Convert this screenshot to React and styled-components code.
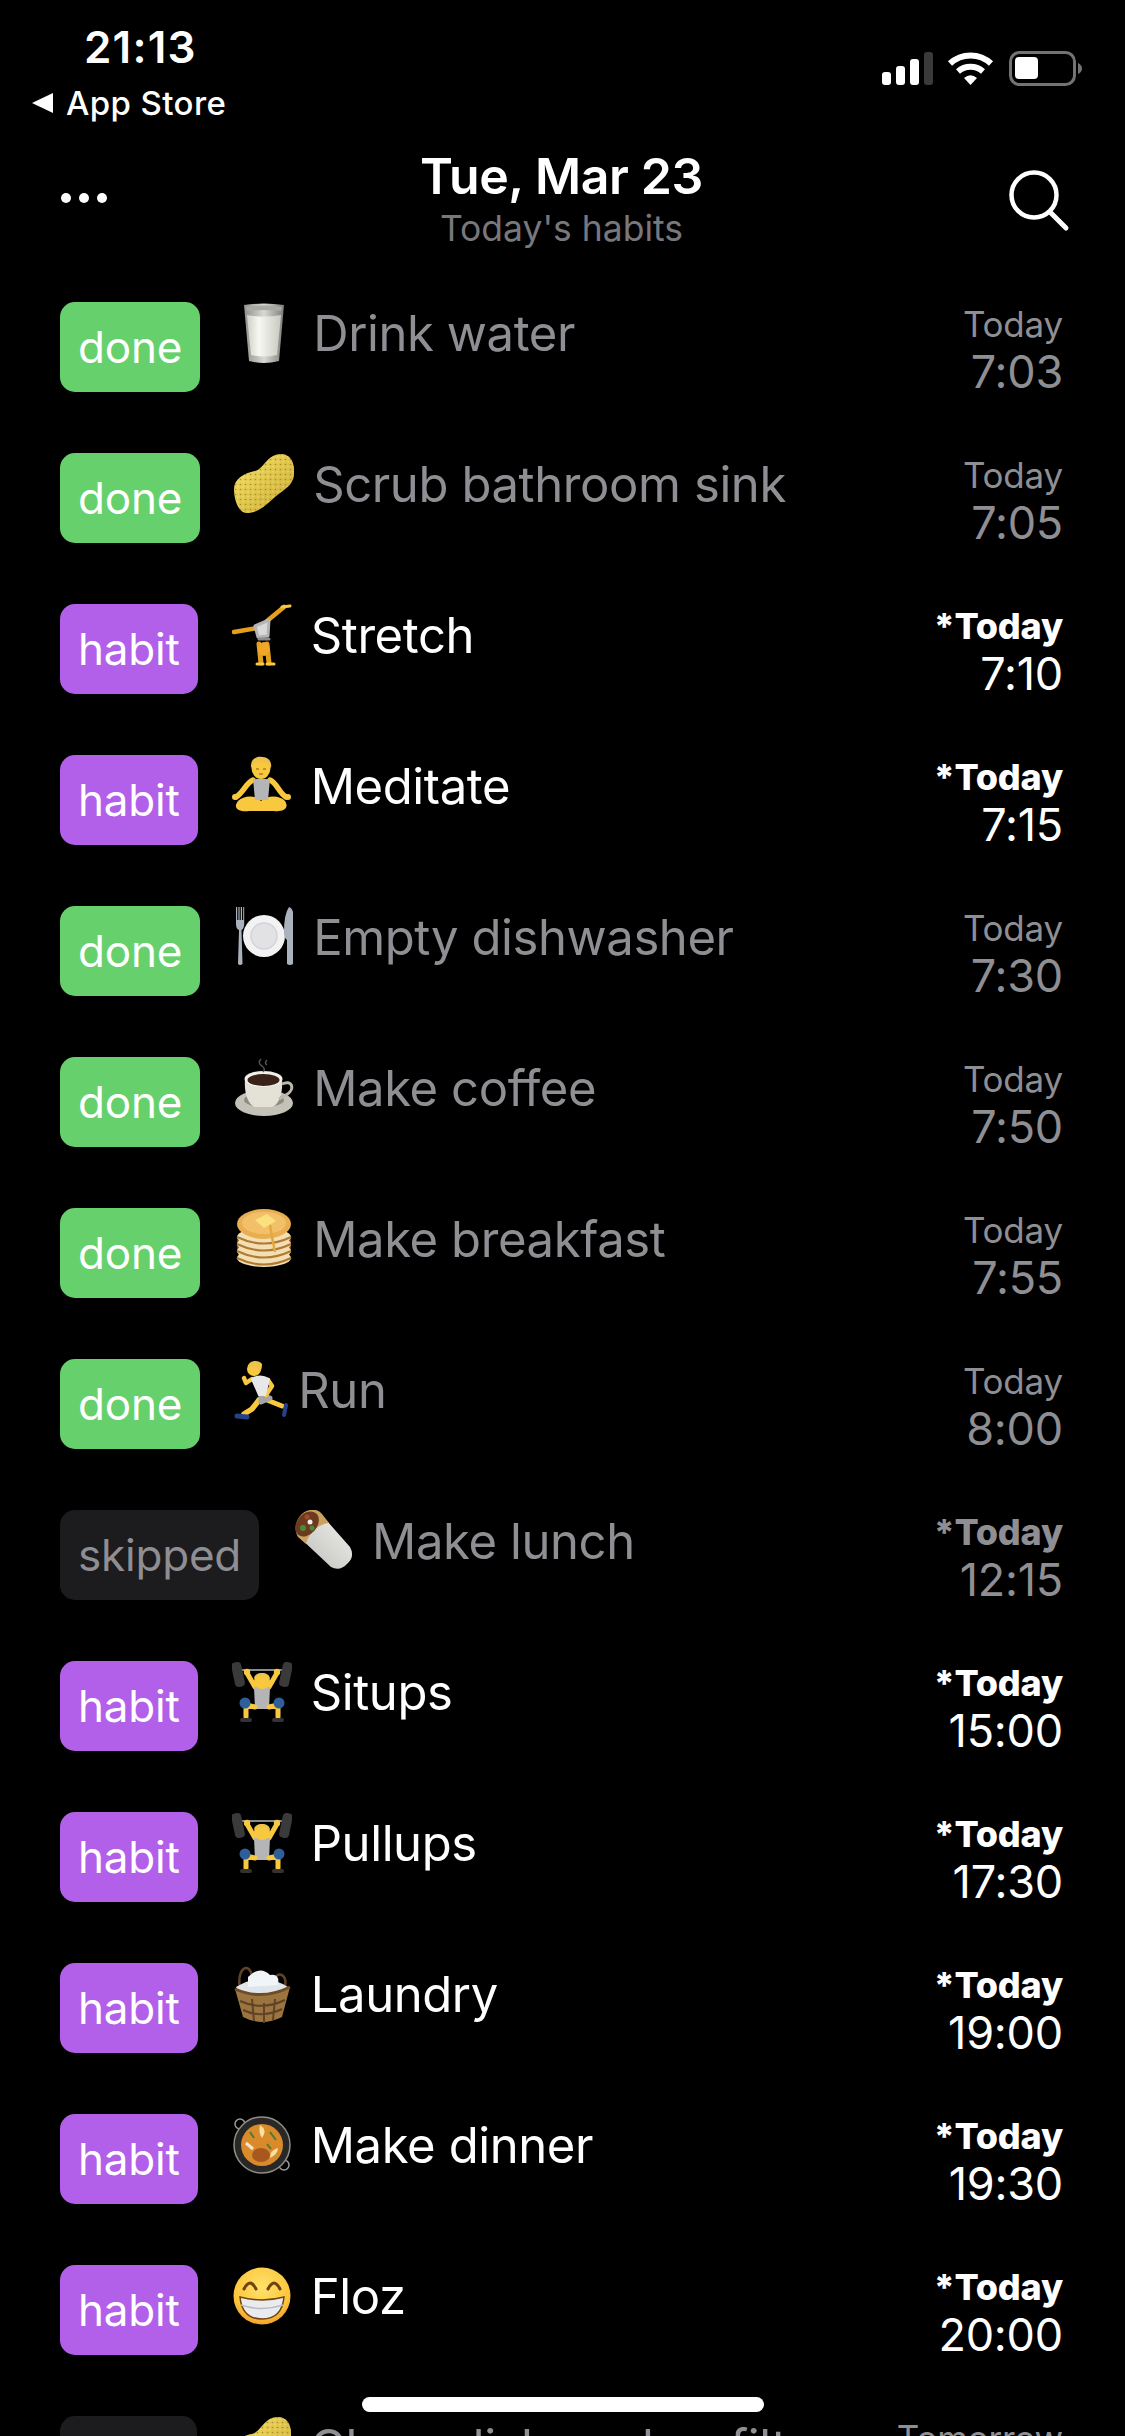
import React from 'react'
import styled, { createGlobalStyle } from 'styled-components'

const FONT = `Inter, 'Noto Sans', 'Liberation Sans', sans-serif`
const GRAY = '#8e8e93'

const GlobalStyle = createGlobalStyle`
  html, body {
    margin: 0;
    padding: 0;
    background: #000;
  }
  body {
    font-family: ${FONT};
    -webkit-font-smoothing: antialiased;
  }
`

const Screen = styled.div`
  position: relative;
  width: 1125px;
  height: 2436px;
  background: #000;
  color: #fff;
  overflow: hidden;
`

const StatusBar = styled.div`
  display: flex;
  justify-content: space-between;
  align-items: flex-start;
  height: 122px;
  padding: 0 43px 0 32px;
`

const StatusLeft = styled.div`
  display: flex;
  flex-direction: column;
  padding-top: 22px;
`

const Clock = styled.div`
  margin-left: 52px;
  font-size: 44px;
  line-height: 50px;
  font-weight: 600;
  letter-spacing: 1.2px;
`

const BackLink = styled.div`
  display: flex;
  align-items: center;
  gap: 13px;
  margin-top: 11px;
  font-size: 33px;
  line-height: 40px;
  font-weight: 500;
  letter-spacing: 0.4px;
`

const BackArrow = styled.span`
  width: 0;
  height: 0;
  border-style: solid;
  border-width: 10px 21px 10px 0;
  border-color: transparent #fff transparent transparent;
`

const StatusIcons = styled.div`
  padding-top: 51px;
`

const NavBar = styled.div`
  display: flex;
  justify-content: space-between;
  align-items: center;
  height: 122px;
  margin-top: 12px;
  padding: 0 55px 0 61px;
`

const Dots = styled.div`
  display: flex;
  gap: 8px;
  width: 100px;
  padding-top: 6px;
  span {
    width: 10px;
    height: 10px;
    border-radius: 50%;
    background: #fff;
  }
`

const NavTitle = styled.div`
  display: flex;
  flex-direction: column;
  align-items: center;
  margin: 8px 8px 0 0;
`

const DateText = styled.div`
  font-size: 50px;
  line-height: 54px;
  font-weight: 600;
  letter-spacing: -0.4px;
`

const SubText = styled.div`
  margin-top: 6px;
  font-size: 35.5px;
  line-height: 40px;
  color: #77777c;
`

const SearchBox = styled.div`
  display: flex;
  justify-content: flex-end;
  width: 100px;
  padding-top: 12px;
`

const List = styled.div`
  margin-top: 46px;
`

const Row = styled.div`
  display: flex;
  align-items: flex-start;
  height: 151px;
  padding: 0 62px 0 60px;
`

const BADGE_BG = { done: '#66d16c', habit: '#b25fe9', skipped: '#1c1c1e', later: '#1c1c1e' }

const Badge = styled.div`
  flex: none;
  box-sizing: border-box;
  min-width: 137px;
  height: 90px;
  padding: 0 18px;
  margin-right: 34px;
  border-radius: 15px;
  background: ${(p) => BADGE_BG[p.$kind]};
  color: ${(p) => (p.$kind === 'skipped' ? GRAY : '#fff')};
  font-size: 44px;
  line-height: 90px;
  letter-spacing: -0.2px;
  text-align: center;
`

const Title = styled.div`
  flex: 1;
  display: flex;
  align-items: flex-start;
  gap: ${(p) => (p.$tight ? '4px' : '19px')};
  min-width: 0;
  white-space: nowrap;
`

const EmojiBox = styled.svg`
  flex: none;
  width: 60px;
  height: 62px;
`

const Name = styled.div`
  margin-top: 3px;
  font-size: 49px;
  line-height: 58px;
  letter-spacing: -0.4px;
  color: ${(p) => (p.$dim ? GRAY : '#fff')};
`

const When = styled.div`
  flex: none;
  display: flex;
  flex-direction: column;
  align-items: flex-end;
  color: ${(p) => (p.$dim ? GRAY : '#fff')};
`

const Day = styled.div`
  font-size: ${(p) => (p.$bold ? '36px' : '35px')};
  line-height: 44px;
  font-weight: ${(p) => (p.$bold ? 800 : 400)};
  letter-spacing: -0.2px;
`

const Time = styled.div`
  font-size: 45px;
  line-height: 52px;
  letter-spacing: -0.2px;
`

const HomeBar = styled.div`
  position: absolute;
  left: 362px;
  bottom: 24px;
  width: 402px;
  height: 15px;
  border-radius: 8px;
  background: #fff;
`

function StatusGlyphs() {
  return (
    <svg width="200" height="36" viewBox="0 0 200 36">
      <g fill="#fff">
        <rect x="0" y="21" width="9" height="13" rx="3" />
        <rect x="14" y="15" width="9" height="19" rx="3" />
        <rect x="28" y="8" width="9" height="26" rx="3" />
      </g>
      <rect x="42" y="1" width="9" height="33" rx="3" fill="#3a3a3c" />
      <g fill="none" stroke="#fff" strokeWidth="6">
        <path d="M68 12.5 A 30 30 0 0 1 109 12.5" />
        <path d="M76 20.5 A 19 19 0 0 1 101 20.5" />
      </g>
      <path d="M82 27 Q 88.5 21.5 95 27 L 88.5 34 Z" fill="#fff" />
      <rect x="128.5" y="1.5" width="64" height="32" rx="9" fill="none" stroke="#737376" strokeWidth="3" />
      <rect x="133" y="6" width="23" height="22" rx="4" fill="#fff" />
      <path d="M196 12 Q 200 14 200 17.5 Q 200 21 196 23 Z" fill="#737376" />
    </svg>
  )
}

function SearchIcon() {
  return (
    <svg width="62" height="64" viewBox="0 0 62 64" fill="none" stroke="#fff" strokeLinecap="round">
      <circle cx="26" cy="26" r="22.5" strokeWidth="4.5" />
      <path d="M42 43 L58 59" strokeWidth="5" />
    </svg>
  )
}

const Skin = '#f8c93e'
const SkinDark = '#e49f1e'
const Shirt = '#b5b5b8'

function Milk() {
  return (
    <>
      <defs>
        <linearGradient id="glass" x1="0" x2="1">
          <stop offset="0" stopColor="#8f8f8c" />
          <stop offset="0.5" stopColor="#d8d8d4" />
          <stop offset="1" stopColor="#7c7c7a" />
        </linearGradient>
        <linearGradient id="milk" x1="0" x2="1">
          <stop offset="0" stopColor="#cfcfc8" />
          <stop offset="0.35" stopColor="#f8f8f2" />
          <stop offset="1" stopColor="#c9c9c2" />
        </linearGradient>
      </defs>
      <path d="M10 3 Q30 0 50 3 L45 59 Q30 63 15 59 Z" fill="url(#glass)" />
      <path d="M13 13 Q30 16 47 13 L43 53 Q30 56 17 53 Z" fill="url(#milk)" />
      <path d="M12 5 Q30 2 48 5 L47 9 Q30 7 13 9 Z" fill="#a9a9a6" />
    </>
  )
}

const SPONGE_PATH =
  'M0 36 C0 26 10 20 21 18 C30 16 33 1 47 1 C58 1 61 12 60 22 C59 33 49 37 41 44 C32 52 24 60 13 60 C4 60 0 46 0 36 Z'

function Sponge() {
  return (
    <>
      <defs>
        <linearGradient id="sponge" x1="0" y1="0" x2="1" y2="1">
          <stop offset="0" stopColor="#f6e268" />
          <stop offset="1" stopColor="#c8a830" />
        </linearGradient>
        <pattern id="pores" width="5" height="5" patternUnits="userSpaceOnUse">
          <circle cx="1.5" cy="1.5" r="0.8" fill="#a98c25" />
          <circle cx="4" cy="3.8" r="0.5" fill="#fff2a0" />
        </pattern>
      </defs>
      <path d={SPONGE_PATH} fill="url(#sponge)" />
      <path d={SPONGE_PATH} fill="url(#pores)" />
    </>
  )
}

function Cartwheel() {
  return (
    <g fill="none" strokeLinecap="round" strokeLinejoin="round">
      <path d="M35 17 L52 3" stroke={SkinDark} strokeWidth="4.5" />
      <path d="M58 2 L50 3" stroke={Skin} strokeWidth="3" />
      <path d="M25 24 L2 28" stroke={SkinDark} strokeWidth="4.5" />
      <path d="M27 40 L29 59 M35 40 L37 59" stroke={SkinDark} strokeWidth="5" />
      <path d="M25 60 H31 M35 60 H42" stroke={Skin} strokeWidth="3" />
      <path d="M23 22 L37 16 L36 32 L26 33 Z" fill="#d9d9da" stroke="#b5b5b8" strokeWidth="3" />
      <ellipse cx="32" cy="45" rx="5.5" ry="7" fill="#eea726" stroke="none" />
      <path d="M27 35 L37 35" stroke="#8b8b8b" strokeWidth="3" />
    </g>
  )
}

function Meditate() {
  return (
    <g>
      <path d="M6 46 C12 40 24 40 29 46 C35 40 48 40 53 46 C58 54 50 57 42 56 C34 56 25 56 17 56 C8 57 0 54 6 46 Z" fill={Skin} />
      <path d="M21 25 C14 28 11 38 4 42 M38 25 C45 28 47 38 54 42" stroke={Skin} strokeWidth="5.5" fill="none" strokeLinecap="round" />
      <path d="M21 24 H38 L36 45 H23 Z" fill={Shirt} />
      <circle cx="3" cy="42" r="3" fill={Skin} />
      <circle cx="56" cy="42" r="3" fill={Skin} />
      <ellipse cx="29" cy="13" rx="9.5" ry="11" fill={Skin} />
      <path d="M19 13 C18 3 26 1 30 2 C37 2 40 7 39 13 C36 9 32 6 26 8 C23 8 21 10 19 13 Z" fill="#efc24a" />
      <path d="M24 14 H27 M31 14 H34 M27 19 H31" stroke="#8a5a10" strokeWidth="1.2" />
    </g>
  )
}

function Plate() {
  return (
    <>
      <circle cx="30" cy="30" r="21" fill="#f2f2f2" />
      <circle cx="30" cy="30" r="13" fill="#e2e2e4" stroke="#cfd4dc" strokeWidth="1.5" />
      <g fill="#aab2bd">
        <path d="M2 1 H3.2 V14 H4.4 V1 H5.6 V14 H6.8 V1 H8 V14 H9.2 V1 H10.2 V18 Q10 23 7.5 24 L8.5 58 Q6 60 4 58 L5 24 Q2 23 2 18 Z" />
        <path d="M55 1 Q58 2 59 6 V58 Q56 60 53 58 L53 34 Q50 32 50 26 Q50 8 55 1 Z" />
      </g>
    </>
  )
}

function Coffee() {
  return (
    <>
      <ellipse cx="30" cy="46" rx="29" ry="13" fill="#c4c2b8" />
      <ellipse cx="30" cy="43" rx="20" ry="7" fill="#8e8c82" />
      <path d="M11 22 H48 C49 34 46 47 38 50 H21 C13 47 10 34 11 22 Z" fill="#e4e1d7" />
      <path d="M48 27 C58 22 62 32 52 38 L45 42" fill="none" stroke="#bbb8ad" strokeWidth="3" />
      <ellipse cx="29.5" cy="22" rx="19" ry="8" fill="#f2f0e8" />
      <ellipse cx="29.5" cy="23" rx="16" ry="6" fill="#3a2218" />
      <path d="M27 2 Q23 6 28 9 Q32 12 29 15 M33 3 Q30 6 33 8" fill="none" stroke="#55534e" strokeWidth="1.5" />
    </>
  )
}

function Pancakes() {
  return (
    <>
      <rect x="3" y="20" width="54" height="34" rx="14" fill="#6e4a22" />
      {[50, 43, 36, 29].map((y) => (
        <g key={y}>
          <ellipse cx="30" cy={y} rx="27" ry="9" fill="#f2dfb4" />
          <path d={`M3 ${y} Q30 ${y + 13} 57 ${y}`} fill="none" stroke="#b07a30" strokeWidth="2" />
        </g>
      ))}
      <ellipse cx="30" cy="16" rx="27" ry="15" fill="#eaae52" />
      <ellipse cx="30" cy="15" rx="22" ry="11" fill="#f3c06a" />
      <path d="M21 12 L33 6 L42 13 L30 20 Z" fill="#fbe07e" />
      <path d="M36 17 Q38 30 41 44" fill="none" stroke="#e3a83e" strokeWidth="2.5" />
    </>
  )
}

function Runner() {
  return (
    <g fill="none" strokeLinecap="round" strokeLinejoin="round">
      <path d="M25 41 L18 50 L10 55" stroke={Skin} strokeWidth="5.5" />
      <path d="M33 41 L48 47" stroke={Skin} strokeWidth="5" />
      <path d="M3 57 L13 58" stroke="#26418a" strokeWidth="5" />
      <path d="M52 46 L50 56" stroke="#26418a" strokeWidth="4" />
      <path d="M27 36 L36 39 L27 43 Z" fill="#a5a5a8" stroke="#a5a5a8" strokeWidth="5" />
      <path d="M18 20 L12 24 L10 19" stroke={Skin} strokeWidth="4.5" />
      <path d="M34 21 L38 27 L32 36" stroke={Skin} strokeWidth="4.5" />
      <path d="M18 20 Q26 15 35 20 L31 36 L25 36 Z" fill="#e8e8e8" stroke="#e8e8e8" strokeWidth="2" />
      <circle cx="20" cy="10" r="7" fill={Skin} stroke="none" />
      <path d="M14 8 C14 1 25 0 28 5 C28 10 27 12 25 13 C25 9 21 7 14 8 Z" fill="#efc24a" stroke="none" />
    </g>
  )
}

function Burrito() {
  return (
    <>
      <defs>
        <linearGradient id="wrap" x1="0" y1="1" x2="1" y2="0">
          <stop offset="0" stopColor="#bdbdb8" />
          <stop offset="1" stopColor="#f2f2ee" />
        </linearGradient>
      </defs>
      <path d="M27 3 L57 37 Q62 46 55 53 Q47 62 38 57 L5 26 Z" fill="url(#wrap)" />
      <path d="M5 27 C-1 17 5 2 17 0 C22 -1 27 1 29 4 L36 13 C26 14 16 22 13 34 Z" fill="#c9a25f" />
      <ellipse cx="14" cy="14" rx="10" ry="14" transform="rotate(40 14 14)" fill="#6b3a20" />
      <circle cx="10" cy="18" r="3" fill="#4d8a34" />
      <circle cx="17" cy="12" r="2.5" fill="#eee" />
      <circle cx="14" cy="7" r="2.5" fill="#a24b25" />
      <circle cx="19" cy="18" r="2.5" fill="#4d8a34" />
    </>
  )
}

function Lifter() {
  return (
    <g strokeLinecap="round" strokeLinejoin="round" fill="none">
      <path d="M8 9 H52" stroke="#8b8b8b" strokeWidth="2" />
      <rect x="1" y="1" width="10" height="25" rx="4" transform="rotate(-12 6 13)" fill="#3a3a3a" />
      <rect x="49" y="1" width="10" height="25" rx="4" transform="rotate(12 54 13)" fill="#3a3a3a" />
      <path d="M23 26 L15 12 M37 26 L45 12" stroke={Skin} strokeWidth="5" />
      <circle cx="15" cy="11" r="3.2" fill={Skin} />
      <circle cx="45" cy="11" r="3.2" fill={Skin} />
      <path d="M22 26 H38 L37 48 H23 Z" fill={Shirt} />
      <path d="M23 46 L14 44 L14 56 M37 46 L46 44 L46 56" stroke={Skin} strokeWidth="5" />
      <circle cx="13" cy="42" r="5.5" fill="#2f5f9a" />
      <circle cx="47" cy="42" r="5.5" fill="#2f5f9a" />
      <path d="M10 59 H18 M42 59 H50" stroke="#333" strokeWidth="4" />
      <circle cx="30" cy="20" r="8" fill={Skin} />
      <path d="M22 18 C22 10 38 10 38 18 C34 14 26 14 22 18 Z" fill="#efc24a" />
    </g>
  )
}

function Basket() {
  return (
    <>
      <path d="M8 26 C4 4 18 -2 20 14 M52 26 C58 12 44 4 40 22" fill="none" stroke="#5f4326" strokeWidth="2.5" />
      <path d="M4 24 Q30 8 56 24 L52 32 H8 Z" fill="#dfe5ea" />
      <path d="M16 14 Q28 2 38 12 Q48 10 46 22 L16 24 Z" fill="#f2f5f7" />
      <path d="M3 26 Q30 38 58 24 L50 54 Q30 64 11 54 Z" fill="#9c7440" />
      <path d="M3 26 Q30 38 58 24" fill="none" stroke="#6e4d26" strokeWidth="3" />
      <path d="M8 38 Q30 48 53 37 M11 47 Q30 56 50 46 M20 36 L22 58 M32 40 L32 60 M43 36 L41 57" fill="none" stroke="#5f4326" strokeWidth="2" />
    </>
  )
}

function Paella() {
  return (
    <>
      <circle cx="8" cy="10" r="5" fill="none" stroke="#9a9a98" strokeWidth="1.5" />
      <circle cx="52" cy="51" r="5" fill="none" stroke="#9a9a98" strokeWidth="1.5" />
      <circle cx="30" cy="31" r="28" fill="#2a2826" stroke="#8f8d88" strokeWidth="1.5" />
      <circle cx="30" cy="31" r="21" fill="#d98a2b" />
      <ellipse cx="29" cy="41" rx="9" ry="7" fill="#a8581f" />
      <path d="M21 35 L14 29" stroke="#f0e4d0" strokeWidth="3" />
      <path d="M28 11 Q36 16 30 24 Q26 18 28 11 Z" fill="#f6e2a0" />
      <path d="M38 44 Q46 40 46 34 Q38 36 38 44 Z" fill="#f6e2a0" />
      <path d="M18 18 L22 24 M38 18 L44 26 M35 30 L39 35" stroke="#4e7a2f" strokeWidth="2" />
    </>
  )
}

function Grin() {
  return (
    <>
      <defs>
        <radialGradient id="face" cx="0.5" cy="0.35" r="0.7">
          <stop offset="0" stopColor="#ffe26b" />
          <stop offset="0.7" stopColor="#fcc63c" />
          <stop offset="1" stopColor="#ef9626" />
        </radialGradient>
      </defs>
      <circle cx="30" cy="31" r="28.5" fill="url(#face)" />
      <path d="M12 24 Q18 12 24 24 M36 24 Q42 12 48 24" fill="none" stroke="#6f4312" strokeWidth="3" strokeLinecap="round" />
      <path d="M8 32 Q30 38 52 32 Q50 54 30 54 Q10 54 8 32 Z" fill="#e9ebee" stroke="#6f4312" strokeWidth="1.5" />
      <path d="M9 40 Q30 47 51 40" fill="none" stroke="#b9bcc2" strokeWidth="1.5" />
    </>
  )
}

const EMOJI = {
  milk: Milk,
  sponge: Sponge,
  cartwheel: Cartwheel,
  meditate: Meditate,
  plate: Plate,
  coffee: Coffee,
  pancakes: Pancakes,
  runner: Runner,
  burrito: Burrito,
  lifter: Lifter,
  basket: Basket,
  paella: Paella,
  grin: Grin,
}

function Emoji({ name }) {
  const Drawing = EMOJI[name]
  return (
    <EmojiBox viewBox="0 0 60 62" aria-hidden="true">
      <Drawing />
    </EmojiBox>
  )
}

const habits = [
  { kind: 'done', label: 'done', emoji: 'milk', name: 'Drink water', day: 'Today', time: '7:03' },
  { kind: 'done', label: 'done', emoji: 'sponge', name: 'Scrub bathroom sink', day: 'Today', time: '7:05' },
  { kind: 'habit', label: 'habit', emoji: 'cartwheel', name: 'Stretch', day: '*Today', time: '7:10' },
  { kind: 'habit', label: 'habit', emoji: 'meditate', name: 'Meditate', day: '*Today', time: '7:15' },
  { kind: 'done', label: 'done', emoji: 'plate', name: 'Empty dishwasher', day: 'Today', time: '7:30' },
  { kind: 'done', label: 'done', emoji: 'coffee', name: 'Make coffee', day: 'Today', time: '7:50' },
  { kind: 'done', label: 'done', emoji: 'pancakes', name: 'Make breakfast', day: 'Today', time: '7:55' },
  { kind: 'done', label: 'done', emoji: 'runner', name: 'Run', day: 'Today', time: '8:00', tight: true },
  { kind: 'skipped', label: 'skipped', emoji: 'burrito', name: 'Make lunch', day: '*Today', time: '12:15' },
  { kind: 'habit', label: 'habit', emoji: 'lifter', name: 'Situps', day: '*Today', time: '15:00' },
  { kind: 'habit', label: 'habit', emoji: 'lifter', name: 'Pullups', day: '*Today', time: '17:30' },
  { kind: 'habit', label: 'habit', emoji: 'basket', name: 'Laundry', day: '*Today', time: '19:00' },
  { kind: 'habit', label: 'habit', emoji: 'paella', name: 'Make dinner', day: '*Today', time: '19:30' },
  { kind: 'habit', label: 'habit', emoji: 'grin', name: 'Floz', day: '*Today', time: '20:00' },
  // only the top of this row is on screen
  { kind: 'later', emoji: 'sponge', name: 'Clean dishwasher filter', day: 'Tomorrow' },
]

export default function App() {
  return (
    <Screen>
      <GlobalStyle />
      <StatusBar>
        <StatusLeft>
          <Clock>21:13</Clock>
          <BackLink>
            <BackArrow />
            App Store
          </BackLink>
        </StatusLeft>
        <StatusIcons>
          <StatusGlyphs />
        </StatusIcons>
      </StatusBar>
      <NavBar>
        <Dots>
          <span />
          <span />
          <span />
        </Dots>
        <NavTitle>
          <DateText>Tue, Mar 23</DateText>
          <SubText>Today's habits</SubText>
        </NavTitle>
        <SearchBox>
          <SearchIcon />
        </SearchBox>
      </NavBar>
      <List>
        {habits.map((h, i) => {
          const dim = h.kind !== 'habit'
          const starred = h.day.startsWith('*')
          return (
            <Row key={i}>
              <Badge $kind={h.kind}>{h.label}</Badge>
              <Title $tight={h.tight}>
                <Emoji name={h.emoji} />
                <Name $dim={dim}>{h.name}</Name>
              </Title>
              <When $dim={dim}>
                <Day $bold={starred}>{h.day}</Day>
                <Time>{h.time}</Time>
              </When>
            </Row>
          )
        })}
      </List>
      <HomeBar />
    </Screen>
  )
}
